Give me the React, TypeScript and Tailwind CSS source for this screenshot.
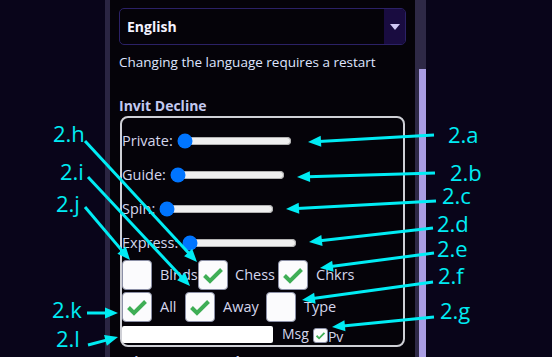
import React from 'react';

const CYAN = '#00ecf4';

// start -> tip of each callout arrow
const arrows: [number, number, number, number][] = [
  [434, 135, 308, 142],
  [435, 173, 297, 177],
  [436, 201, 286, 209],
  [433, 228, 309, 242],
  [434, 253, 320, 268],
  [433, 282, 302, 300],
  [434, 317, 332, 327],
  [85, 141, 197, 262],
  [88, 177, 190, 286],
  [85, 207, 130, 260],
  [87, 313, 118, 313],
  [88, 345, 118, 337],
];

const labels: [string, number, number][] = [
  ['2.a', 448, 143],
  ['2.b', 450, 181],
  ['2.c', 442, 204],
  ['2.d', 437, 232],
  ['2.e', 437, 257],
  ['2.f', 438, 284],
  ['2.g', 440, 319],
  ['2.h', 53, 142],
  ['2.i', 60, 180],
  ['2.j', 56, 212],
  ['2.k', 52, 318],
  ['2.l', 56, 347],
];

function Arrow({ x1, y1, x2, y2 }: { x1: number; y1: number; x2: number; y2: number }) {
  const dx = x2 - x1;
  const dy = y2 - y1;
  const len = Math.hypot(dx, dy);
  const ux = dx / len;
  const uy = dy / len;
  const hl = 13;
  const hw = 5.5;
  const bx = x2 - ux * hl;
  const by = y2 - uy * hl;
  const pts = `${x2},${y2} ${bx - uy * hw},${by + ux * hw} ${bx + uy * hw},${by - ux * hw}`;
  return (
    <g>
      <line x1={x1} y1={y1} x2={bx + ux * 2} y2={by + uy * 2} stroke={CYAN} strokeWidth={3} />
      <polygon points={pts} fill={CYAN} />
    </g>
  );
}

function Check({ small = false, on = false }: { small?: boolean; on?: boolean }) {
  return (
    <div
      className={
        small
          ? 'w-[15px] h-[15px] bg-[#fbfbfd] border border-[#8b8fa6] rounded-[3px] flex items-center justify-center shrink-0'
          : 'w-[30px] h-[30px] bg-[#fbfbfd] border border-[#8b8fa6] rounded-[4px] flex items-center justify-center shrink-0'
      }
    >
      {on && (
        <svg width={small ? 13 : 28} height={small ? 13 : 28} viewBox="0 0 28 28">
          <polyline points="5.5,14.5 11,20 22.5,8.5" fill="none" stroke="#3fae56" strokeWidth={4} />
        </svg>
      )}
    </div>
  );
}

function Slider({ label }: { label: string }) {
  return (
    <div className="h-[34px] flex items-center text-[14.5px]">
      <span>{label}</span>
      <input type="range" defaultValue={0} className="ml-1 w-[115px]" />
    </div>
  );
}

export default function App() {
  return (
    <div
      className="relative w-[552px] h-[357px] overflow-hidden bg-[#09051a] flex text-[14px]"
      style={{ fontFamily: '"Open Sans", "Noto Sans", sans-serif' }}
    >
      <div className="w-[105px] shrink-0" />
      <div className="w-[5px] shrink-0 bg-[#2a2542]" />

      {/* settings panel */}
      <div className="w-[305px] shrink-0 bg-[#050309] pl-[9px] pt-2">
        <div className="w-[287px] h-[37px] flex border border-[#2b2166] rounded-[5px] overflow-hidden">
          <div className="flex-1 flex items-center pl-[7px] font-bold text-[#f4f2ff]">English</div>
          <div className="w-[21px] bg-[#190c40] flex items-center justify-center">
            <svg width="10" height="6" viewBox="0 0 10 6">
              <polygon points="0,0 10,0 5,6" fill="#cfc7f4" />
            </svg>
          </div>
        </div>

        <p className="mt-[7px] leading-5 text-[13.5px] text-[#dfe5ff]">Changing the language requires a restart</p>

        <p className="mt-6 leading-5 font-bold text-[#c3c9f0]">Invit Decline</p>

        <div className="ml-px w-[285px] h-[231px] border-2 border-[#cfd0d6] rounded-lg pt-[6px] text-[#d4d6ec]">
          <Slider label="Private:" />
          <Slider label="Guide:" />
          <Slider label="Spin:" />
          <Slider label="Express:" />

          <div className="flex items-center h-[30px] text-[14.5px]">
            <Check />
            <span className="ml-2 w-[38px]">Blnds</span>
            <Check on />
            <span className="ml-[7px] w-[43px]">Chess</span>
            <Check on />
            <span className="ml-2">Chkrs</span>
          </div>
          <div className="flex items-center h-[30px] mt-[2px] text-[14.5px]">
            <Check on />
            <span className="ml-2 w-[25px]">All</span>
            <Check on />
            <span className="ml-2 w-[43px]">Away</span>
            <Check />
            <span className="ml-2">Type</span>
          </div>
          <div className="flex items-end h-[18px] mt-[3px]">
            <div className="w-[151px] h-[17px] bg-white rounded-[2px]" />
            <span className="ml-[9px] mr-1 leading-[18px]">Msg</span>
            <Check small on />
            <span className="leading-[16px] -mb-[2px]">Pv</span>
          </div>
        </div>

        <p className="mt-[5px] leading-5 font-bold text-[#c3c9f0]">Private Passwords</p>
      </div>

      {/* scrollbar */}
      <div className="w-[11px] shrink-0 bg-[#2e2946] flex justify-end">
        <div className="w-[7px] mt-[69px] bg-[#a99de3]" />
      </div>

      {/* callouts */}
      <svg className="absolute inset-0 pointer-events-none" width={552} height={357} viewBox="0 0 552 357">
        {arrows.map(([x1, y1, x2, y2], i) => (
          <Arrow key={i} x1={x1} y1={y1} x2={x2} y2={y2} />
        ))}
        {labels.map(([t, x, y]) => (
          <text key={t} x={x} y={y} fill={CYAN} fontSize={22} fontFamily='"Open Sans", "Noto Sans", sans-serif'>
            {t}
          </text>
        ))}
      </svg>
    </div>
  );
}
